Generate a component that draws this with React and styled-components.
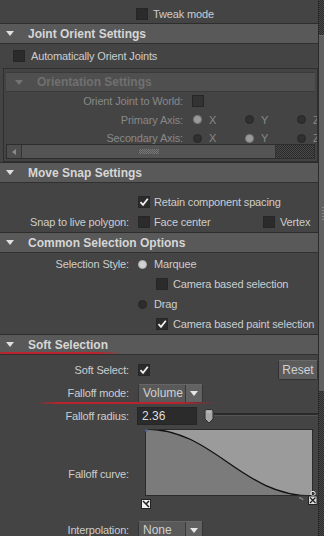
import styled, { createGlobalStyle } from "styled-components";

const GlobalStyle = createGlobalStyle`
  html, body {
    margin: 0;
    padding: 0;
    background: #444444;
    overflow: hidden;
  }
  body {
    font-family: "Liberation Sans", Arial, sans-serif;
    font-size: 11px;
    letter-spacing: -0.15px;
    color: #cdcdcd;
  }
`;

const checker = "repeating-conic-gradient(#2a2a2a 0 25%, #4a4a4a 0 50%) 0 0 / 2px 2px";

const Page = styled.div`
  width: 324px;
  height: 536px;
  display: flex;
  overflow: hidden;
  background: #444444;
`;

const Content = styled.div`
  width: 318px;
  flex: none;
  display: flex;
  flex-direction: column;
  overflow: hidden;
`;

const VScroll = styled.div`
  width: 6px;
  flex: none;
  display: flex;
  flex-direction: column;
  border-left: 1px solid #2b2b2b;
  box-sizing: border-box;
`;

const ScrollTrack = styled.div`
  flex: ${(p) => (p.$grow ? "1" : "none")};
  height: ${(p) => p.$h || 0}px;
  background: ${checker};
`;

const ScrollThumb = styled.div`
  flex: none;
  height: 357px;
  background: #606060;
  border-top: 1px solid #6c6c6c;
  border-bottom: 1px solid #333;
  box-sizing: border-box;
  display: flex;
  align-items: center;
  justify-content: flex-end;

  &::after {
    content: "";
    width: 2px;
    height: 14px;
    background: repeating-linear-gradient(#888 0 1px, transparent 1px 3px);
  }
`;

const TopRow = styled.div`
  height: 23px;
  flex: none;
  box-sizing: border-box;
  padding: 5px 0 0 ${(p) => p.$indent}px;
  display: flex;
  align-items: center;
  gap: ${(p) => p.$gap}px;
`;

const Header = styled.div`
  position: relative;
  flex: none;
  height: ${(p) => p.$h || 21}px;
  box-sizing: border-box;
  display: flex;
  align-items: center;
  padding-left: ${(p) => (p.$dim ? 9 : 6)}px;
  background: ${(p) => (p.$dim ? "#4f4f4f" : "#595959")};
  border-top: 1px solid ${(p) => (p.$dim ? "#3a3a3a" : "#2d2d2d")};
  border-bottom: 1px solid ${(p) => (p.$dim ? "#3a3a3a" : "#303030")};
  font-weight: bold;
  font-size: 12px;
  letter-spacing: 0;
  color: ${(p) => (p.$dim ? "#707070" : "#d6d6d6")};
`;

const Caret = styled.span`
  width: 0;
  height: 0;
  border-left: 4px solid transparent;
  border-right: 4px solid transparent;
  border-top: 5px solid ${(p) => (p.$dim ? "#737373" : "#e0e0e0")};
  margin-right: 14px;
`;

const RedMark = styled.span`
  position: absolute;
  left: ${(p) => p.$left}px;
  bottom: ${(p) => p.$bottom}px;
  width: ${(p) => p.$w}px;
  height: 2px;
  border-radius: 1px;
  background: linear-gradient(to right, ${(p) => (p.$fadeIn ? "transparent, #b8232d 12%" : "#b8232d")}, #b8232d 80%, transparent);
`;

const Section = styled.div`
  flex: none;
  display: flex;
  flex-direction: column;
  gap: ${(p) => p.$gap || 0}px;
  padding-top: ${(p) => p.$pt || 0}px;
`;

const FormRow = styled.div`
  position: relative;
  flex: none;
  display: grid;
  grid-template-columns: ${(p) => p.$label || 129}px 1fr;
  column-gap: 9px;
  align-items: ${(p) => p.$align || "center"};
  height: ${(p) => p.$h || 20}px;
`;

const Label = styled.span`
  text-align: right;
  white-space: nowrap;
  color: ${(p) => (p.$dim ? "#888888" : "#cdcdcd")};
  padding-top: ${(p) => p.$pt || 0}px;
`;

const Controls = styled.div`
  display: flex;
  align-items: center;
  min-width: 0;
  padding-left: ${(p) => p.$indent || 0}px;
  gap: ${(p) => p.$gap || 0}px;
`;

const Option = styled.div`
  display: flex;
  align-items: center;
  gap: ${(p) => p.$gap || 4}px;
  width: ${(p) => (p.$w ? `${p.$w}px` : "auto")};
  flex: none;
  white-space: nowrap;
  color: ${(p) => (p.$dim ? "#888888" : "#cdcdcd")};
`;

const Box = styled.span`
  width: 12px;
  height: 12px;
  flex: none;
  box-sizing: border-box;
  background: ${(p) => (p.$dim ? "#333333" : "#2b2b2b")};
  border: 1px solid #262626;
  display: inline-flex;
  align-items: center;
  justify-content: center;
`;

const Radio = styled.span`
  width: 9px;
  height: 9px;
  flex: none;
  border-radius: 50%;
  box-sizing: border-box;
  background: ${(p) =>
    p.$on ? (p.$dim ? "#9a9a9a" : "#d2d2d2") : p.$dim ? "#303030" : "#2c2c2c"};
  border: 1px solid ${(p) => (p.$on ? (p.$dim ? "#7a7a7a" : "#b0b0b0") : "#262626")};
`;

const Frame = styled.div`
  flex: none;
  margin-left: 3px;
  width: 315px;
  height: 94px;
  box-sizing: border-box;
  border: 1px solid #2f2f2f;
  padding: 3px 2px 2px;
  display: flex;
  flex-direction: column;
  overflow: hidden;
`;

const FrameRow = styled.div`
  flex: none;
  display: grid;
  grid-template-columns: 177px max-content;
  column-gap: 9px;
  align-items: ${(p) => p.$align || "center"};
  height: ${(p) => p.$h}px;
  white-space: nowrap;
`;

const AxisGroup = styled.div`
  display: flex;
  align-items: center;
  padding-left: 1px;
`;

const HScroll = styled.div`
  flex: none;
  height: 15px;
  display: flex;
  box-sizing: border-box;
  border: 1px solid #2d2d2d;
`;

const ArrowBtn = styled.div`
  width: 14px;
  flex: none;
  background: #4e4e4e;
  border-right: 1px solid #333;
  display: flex;
  align-items: center;
  justify-content: center;

  &::before {
    content: "";
    border-top: 3px solid transparent;
    border-bottom: 3px solid transparent;
    border-right: 4px solid #8a8a8a;
  }
`;

const HThumb = styled.div`
  width: 253px;
  flex: none;
  background: #545454;
  border-right: 1px solid #333;
  display: flex;
  align-items: center;
  justify-content: center;

  &::before {
    content: "";
    width: 20px;
    height: 5px;
    background: repeating-conic-gradient(#7a7a7a 0 25%, transparent 0 50%) 0 0 / 2px 2px;
  }
`;

const HTrack = styled.div`
  flex: 1;
  background: ${checker};
`;

const Button = styled.div`
  margin-left: auto;
  width: 40px;
  height: 20px;
  box-sizing: border-box;
  background: #5c5c5c;
  border: 1px solid #333;
  border-top-color: #6a6a6a;
  border-radius: 2px;
  display: flex;
  align-items: center;
  justify-content: center;
  color: #d2d2d2;
  font-size: 12px;
  letter-spacing: 0;
`;

const Dropdown = styled.div`
  width: 65px;
  height: 19px;
  box-sizing: border-box;
  display: flex;
  background: #595959;
  border: 1px solid #353535;
  border-top-color: #666;
  border-radius: 2px;
  overflow: hidden;
`;

const DropText = styled.span`
  flex: 1;
  padding-left: 4px;
  display: flex;
  align-items: center;
  color: #d0d0d0;
  font-size: 12px;
  letter-spacing: 0;
`;

const DropArrow = styled.span`
  width: 16px;
  flex: none;
  background: #626262;
  border-left: 1px solid #3a3a3a;
  display: flex;
  align-items: center;
  justify-content: center;

  &::before {
    content: "";
    border-left: 4px solid transparent;
    border-right: 4px solid transparent;
    border-top: 5px solid #e6e6e6;
  }
`;

const NumField = styled.div`
  width: 60px;
  height: 18px;
  flex: none;
  box-sizing: border-box;
  margin-left: -1px;
  padding-left: 4px;
  background: #2b2b2b;
  border: 1px solid #262626;
  display: flex;
  align-items: center;
  color: #dedede;
  font-size: 12px;
  letter-spacing: 0;
`;

const SliderWrap = styled.div`
  flex: 1;
  display: flex;
  align-items: center;
  margin-left: 7px;
  height: 18px;
`;

const SliderLine = styled.div`
  flex: 1;
  height: 2px;
  margin-top: -4px;
  background: #2a2a2a;
  border-bottom: 1px solid #555;
`;

const CurveArea = styled.div`
  display: flex;
  flex-direction: column;
`;

const CurveBox = styled.svg`
  display: block;
  margin-left: 7px;
`;

const CurveIcons = styled.div`
  width: 177px;
  margin-left: 3px;
  height: 14px;
  display: flex;
  justify-content: space-between;
  align-items: flex-start;
`;

function Check() {
  return (
    <svg width="10" height="10" viewBox="0 0 10 10">
      <path d="M1.5 5.2 L4 7.8 L8.8 1.8" fill="none" stroke="#f0f0f0" strokeWidth="1.8" />
    </svg>
  );
}

function CheckBox({ on, dim }) {
  return <Box $dim={dim}>{on && <Check />}</Box>;
}

function SliderHandle() {
  return (
    <svg width="10" height="15" viewBox="0 0 10 15">
      <path d="M1 2 Q1 0.5 2.5 0.5 H7.5 Q9 0.5 9 2 V10 L5 14 L1 10 Z" fill="#a8a8a8" stroke="#2e2e2e" />
      <path d="M3 3 H7" stroke="#c8c8c8" />
    </svg>
  );
}

function KeyIcon() {
  return (
    <svg width="10" height="11" viewBox="0 0 10 11" style={{ marginTop: 3 }}>
      <rect x="0.5" y="0.5" width="9" height="9" fill="#f2f2f2" stroke="#222" />
      <path d="M2 2 L8 8 M8 2 L5 5" stroke="#222" strokeWidth="1.6" />
    </svg>
  );
}

function EndIcon() {
  return (
    <svg width="20" height="14" viewBox="0 0 20 14" style={{ marginTop: -5 }}>
      <path d="M1 7 Q4 6.5 5 9" stroke="#8a8a8a" strokeWidth="1.4" fill="none" />
      <circle cx="15" cy="2.5" r="2.2" fill="none" stroke="#eee" />
      <rect x="10.5" y="5" width="8.5" height="8.5" fill="#ddd" stroke="#222" />
      <path d="M12 6.5 L17.5 12 M17.5 6.5 L12 12" stroke="#222" strokeWidth="1.3" />
    </svg>
  );
}

function Curve() {
  return (
    <CurveBox width="168" height="67" viewBox="0 0 168 67">
      <rect x="0" y="0" width="168" height="67" fill="#9b9b9b" />
      <path d="M0 0 C70 0, 95 67, 168 67 L0 67 Z" fill="#7b7b7b" />
      <path d="M0 0 C70 0, 95 67, 168 67" fill="none" stroke="#111" strokeWidth="1.3" />
      <rect x="0.5" y="0.5" width="167" height="66" fill="none" stroke="#2a2a2a" />
      <circle cx="1.5" cy="1.5" r="1.5" fill="#4a6a9a" />
    </CurveBox>
  );
}

export default function App() {
  return (
    <>
      <GlobalStyle />
      <Page>
        <Content>
          <TopRow $indent={136} $gap={5}>
            <CheckBox />
            <span>Tweak mode</span>
          </TopRow>

          <Header>
            <Caret />
            Joint Orient Settings
          </Header>
          <TopRow $indent={13} $gap={6} style={{ height: 24, paddingTop: 0 }}>
            <CheckBox />
            <span>Automatically Orient Joints</span>
          </TopRow>

          <Frame>
            <Header $dim $h={20}>
              <Caret $dim />
              Orientation Settings
            </Header>
            <FrameRow $h={18}>
              <Label $dim>Orient Joint to World:</Label>
              <CheckBox dim />
            </FrameRow>
            <FrameRow $h={19}>
              <Label $dim>Primary Axis:</Label>
              <AxisGroup>
                <Option $dim $gap={7} $w={52}><Radio $dim $on />X</Option>
                <Option $dim $gap={7} $w={52}><Radio $dim />Y</Option>
                <Option $dim $gap={7} $w={52}><Radio $dim />Z</Option>
              </AxisGroup>
            </FrameRow>
            <FrameRow $h={15} $align="end">
              <Label $dim>Secondary Axis:</Label>
              <AxisGroup>
                <Option $dim $gap={7} $w={52}><Radio $dim />X</Option>
                <Option $dim $gap={7} $w={52}><Radio $dim $on />Y</Option>
                <Option $dim $gap={7} $w={52}><Radio $dim />Z</Option>
              </AxisGroup>
            </FrameRow>
            <HScroll>
              <ArrowBtn />
              <HThumb />
              <HTrack />
            </HScroll>
          </Frame>

          <Header>
            <Caret />
            Move Snap Settings
          </Header>
          <Section $pt={9}>
            <FormRow>
              <span />
              <Controls>
                <Option>
                  <CheckBox on />
                  Retain component spacing
                </Option>
              </Controls>
            </FormRow>
            <FormRow>
              <Label>Snap to live polygon:</Label>
              <Controls>
                <Option $w={125}>
                  <CheckBox />
                  Face center
                </Option>
                <Option $gap={5}>
                  <CheckBox />
                  Vertex
                </Option>
              </Controls>
            </FormRow>
          </Section>

          <Header>
            <Caret />
            Common Selection Options
          </Header>
          <Section $pt={1}>
            <FormRow>
              <Label>Selection Style:</Label>
              <Controls>
                <Option $gap={7}>
                  <Radio $on />
                  Marquee
                </Option>
              </Controls>
            </FormRow>
            <FormRow>
              <span />
              <Controls $indent={18}>
                <Option $gap={5}>
                  <CheckBox />
                  Camera based selection
                </Option>
              </Controls>
            </FormRow>
            <FormRow>
              <span />
              <Controls>
                <Option $gap={7}>
                  <Radio />
                  Drag
                </Option>
              </Controls>
            </FormRow>
            <FormRow>
              <span />
              <Controls $indent={18}>
                <Option $gap={5}>
                  <CheckBox on />
                  Camera based paint selection
                </Option>
              </Controls>
            </FormRow>
          </Section>

          <Header>
            <Caret />
            Soft Selection
            <RedMark $left={0} $bottom={0} $w={122} />
          </Header>
          <Section $pt={5} $gap={3}>
            <FormRow>
              <Label>Soft Select:</Label>
              <Controls>
                <CheckBox on />
                <Button>Reset</Button>
              </Controls>
            </FormRow>
            <FormRow>
              <Label>Falloff mode:</Label>
              <Controls>
                <Dropdown>
                  <DropText>Volume</DropText>
                  <DropArrow />
                </Dropdown>
              </Controls>
              <RedMark $left={36} $bottom={-1} $w={180} $fadeIn />
            </FormRow>
            <FormRow>
              <Label>Falloff radius:</Label>
              <Controls>
                <NumField>2.36</NumField>
                <SliderWrap>
                  <SliderHandle />
                  <SliderLine />
                </SliderWrap>
              </Controls>
            </FormRow>
            <FormRow $h={81} $align="center">
              <Label $pt={8}>Falloff curve:</Label>
              <CurveArea>
                <Curve />
                <CurveIcons>
                  <KeyIcon />
                  <EndIcon />
                </CurveIcons>
              </CurveArea>
            </FormRow>
          </Section>
          <Section $pt={10}>
            <FormRow>
              <Label>Interpolation:</Label>
              <Controls>
                <Dropdown>
                  <DropText>None</DropText>
                  <DropArrow />
                </Dropdown>
              </Controls>
            </FormRow>
          </Section>
        </Content>
        <VScroll>
          <ScrollTrack $h={35} />
          <ScrollThumb />
          <ScrollTrack $grow />
        </VScroll>
      </Page>
    </>
  );
}
